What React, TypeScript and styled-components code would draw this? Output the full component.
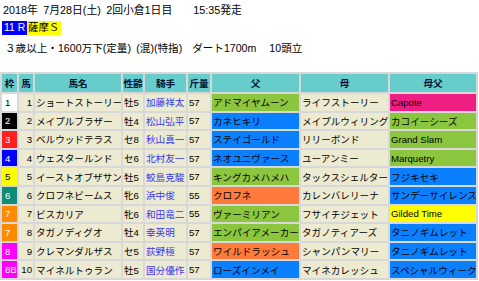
import React from 'react';
import styled, {createGlobalStyle} from 'styled-components';

const GlobalStyle = createGlobalStyle`
    body {
        margin: 0;
        background: #FFFFFF;
        font-family: "Liberation Sans", "Noto Sans CJK JP", sans-serif;
        font-size: 10.8px;
        color: #000000;
    }
`;

const Page = styled.div`
    width: 479px;
    padding-top: 3px;
`;

const TitleLine = styled.div`
    display: flex;
    height: 15px;
    line-height: 15px;
    padding-left: 3px;
    white-space: pre;
`;

const StartTime = styled.span`
    margin-left: 21px;
`;

const RaceLine = styled.div`
    display: flex;
    margin-top: 3px;
    padding-left: 2px;
    height: 14px;
    line-height: 14px;
    font-size: 10.4px;
    white-space: nowrap;
`;

const RaceNo = styled.div`
    background: #0000FF;
    color: #FFFFFF;
    width: 25px;
    padding-left: 2px;
    box-sizing: border-box;
`;

const RaceName = styled.div`
    background: #FFFF00;
    color: #000000;
    width: 34px;
    padding-left: 1px;
    box-sizing: border-box;
    overflow: hidden;
`;

const Conditions = styled.div`
    display: flex;
    margin-top: 6px;
    padding-left: 5px;
    height: 15px;
    line-height: 15px;
    white-space: pre;
    font-size: 10.6px;
`;

const Gap = styled.span<{$w: number}>`
    display: inline-block;
    width: ${(p) => p.$w}px;
`;

const Table = styled.table`
    margin-top: 16px;
    width: 478px;
    table-layout: fixed;
    border-collapse: separate;
    border-spacing: 2px;
    background: #D8D8D8;
    font-size: 9.6px;
`;

const Th = styled.th<{$w: number}>`
    width: ${(p) => p.$w}px;
    height: 18px;
    padding: 0;
    background: #66CCCC;
    color: #001133;
    font-weight: bold;
    text-align: center;
    box-sizing: border-box;
`;

const cellColors: Record<string, string> = {
    plain: '#ECEAD0',
    green: '#8CC63F',
    blue: '#0A80FF',
    orange: '#FF7B3B',
    pink: '#EE1E82',
    yellow: '#FFFF00',
};

const Td = styled.td<{$tone?: string; $right?: boolean; $jockey?: boolean}>`
    height: 16.6px;
    padding: 0 1px;
    background: ${(p) => cellColors[p.$tone || 'plain']};
    color: ${(p) => (p.$jockey ? '#3838F0' : '#000000')};
    text-align: ${(p) => (p.$right ? 'right' : 'left')};
    white-space: nowrap;
    overflow: hidden;
    box-sizing: border-box;
`;

const wakuColors: Record<string, [string, string]> = {
    '1': ['#FFFFFF', '#000000'],
    '2': ['#000000', '#FFFFFF'],
    '3': ['#FF2020', '#FFFFFF'],
    '4': ['#0000FF', '#FFFFFF'],
    '5': ['#FFFF00', '#000000'],
    '6': ['#0E8C78', '#FFFFFF'],
    '7': ['#FF8A00', '#FFFFFF'],
    '8': ['#FF00FF', '#FFFFFF'],
};

const WakuCell = styled.td<{$waku: string}>`
    height: 16.6px;
    padding: 0 0 0 3px;
    background: ${(p) => wakuColors[p.$waku][0]};
    color: ${(p) => wakuColors[p.$waku][1]};
    white-space: nowrap;
    overflow: hidden;
    box-sizing: border-box;
`;

type Runner = {
    waku: string;
    label: string;
    no: number;
    name: string;
    sexAge: string;
    jockey: string;
    weight: number;
    sire: string;
    sireTone: string;
    dam: string;
    damSire: string;
    damSireTone: string;
};

const runners: Runner[] = [
    {waku: '1', label: '1', no: 1, name: 'ショートストーリー', sexAge: '牡5', jockey: '加藤祥太', weight: 57, sire: 'アドマイヤムーン', sireTone: 'green', dam: 'ライフストーリー', damSire: 'Capote', damSireTone: 'pink'},
    {waku: '2', label: '2', no: 2, name: 'メイプルブラザー', sexAge: '牡4', jockey: '松山弘平', weight: 57, sire: 'カネヒキリ', sireTone: 'blue', dam: 'メイプルウィリング', damSire: 'カコイーシーズ', damSireTone: 'green'},
    {waku: '3', label: '3', no: 3, name: 'ベルウッドテラス', sexAge: 'セ8', jockey: '秋山真一', weight: 57, sire: 'ステイゴールド', sireTone: 'blue', dam: 'リリーボンド', damSire: 'Grand Slam', damSireTone: 'green'},
    {waku: '4', label: '4', no: 4, name: 'ウェスタールンド', sexAge: 'セ6', jockey: '北村友一', weight: 57, sire: 'ネオユニヴァース', sireTone: 'blue', dam: 'ユーアンミー', damSire: 'Marquetry', damSireTone: 'green'},
    {waku: '5', label: '5', no: 5, name: 'イーストオブザサン', sexAge: '牡5', jockey: '鮫島克駿', weight: 57, sire: 'キングカメハメハ', sireTone: 'green', dam: 'タックスシェルター', damSire: 'フジキセキ', damSireTone: 'blue'},
    {waku: '6', label: '6', no: 6, name: 'クロフネビームス', sexAge: '牝6', jockey: '浜中俊', weight: 55, sire: 'クロフネ', sireTone: 'orange', dam: 'カレンバレリーナ', damSire: 'サンデーサイレンス', damSireTone: 'blue'},
    {waku: '7', label: '7', no: 7, name: 'ビスカリア', sexAge: '牝6', jockey: '和田竜二', weight: 55, sire: 'ヴァーミリアン', sireTone: 'green', dam: 'フサイチジェット', damSire: 'Gilded Time', damSireTone: 'yellow'},
    {waku: '7', label: '7', no: 8, name: 'タガノディグオ', sexAge: '牡4', jockey: '幸英明', weight: 57, sire: 'エンパイアメーカー', sireTone: 'green', dam: 'タガノティアーズ', damSire: 'タニノギムレット', damSireTone: 'blue'},
    {waku: '8', label: '8', no: 9, name: 'クレマンダルザス', sexAge: 'セ5', jockey: '荻野極', weight: 57, sire: 'ワイルドラッシュ', sireTone: 'orange', dam: 'シャンパンマリー', damSire: 'タニノギムレット', damSireTone: 'blue'},
    {waku: '8', label: '8B', no: 10, name: 'マイネルトゥラン', sexAge: '牡5', jockey: '国分優作', weight: 57, sire: 'ローズインメイ', sireTone: 'blue', dam: 'マイネカレッシュ', damSire: 'スペシャルウィーク', damSireTone: 'blue'},
];

const columns: [string, number][] = [
    ['枠', 15],
    ['馬', 14],
    ['馬名', 86],
    ['性齢', 20],
    ['騎手', 41],
    ['斤量', 22],
    ['父', 87],
    ['母', 87],
    ['母父', 86],
];

const App = () => {
    return (
        <Page>
            <GlobalStyle/>
            <TitleLine>
                {'2018年\u20027月28日(土)\u20022回小倉1日目'}
                <StartTime>{'15:35発走'}</StartTime>
            </TitleLine>
            <RaceLine>
                <RaceNo>{'11 R'}</RaceNo>
                <RaceName>{'薩摩Ｓ'}</RaceName>
            </RaceLine>
            <Conditions>
                {'３歳以上・1600万下(定量)\u2002(混)(特指)'}
                <Gap $w={10}/>
                {'ダート1700m'}
                <Gap $w={13}/>
                {'10頭立'}
            </Conditions>
            <Table>
                <thead>
                    <tr>
                        {columns.map(([label, w]) => (
                            <Th
                                key={label}
                                $w={w}
                            >
                                {label}
                            </Th>
                        ))}
                    </tr>
                </thead>
                <tbody>
                    {runners.map((r) => (
                        <tr key={r.no}>
                            <WakuCell $waku={r.waku}>{r.label}</WakuCell>
                            <Td $right={true}>{r.no}</Td>
                            <Td>{r.name}</Td>
                            <Td>{r.sexAge}</Td>
                            <Td $jockey={true}>{r.jockey}</Td>
                            <Td>{r.weight}</Td>
                            <Td $tone={r.sireTone}>{r.sire}</Td>
                            <Td>{r.dam}</Td>
                            <Td $tone={r.damSireTone}>{r.damSire}</Td>
                        </tr>
                    ))}
                </tbody>
            </Table>
        </Page>
    );
};

export default App;
